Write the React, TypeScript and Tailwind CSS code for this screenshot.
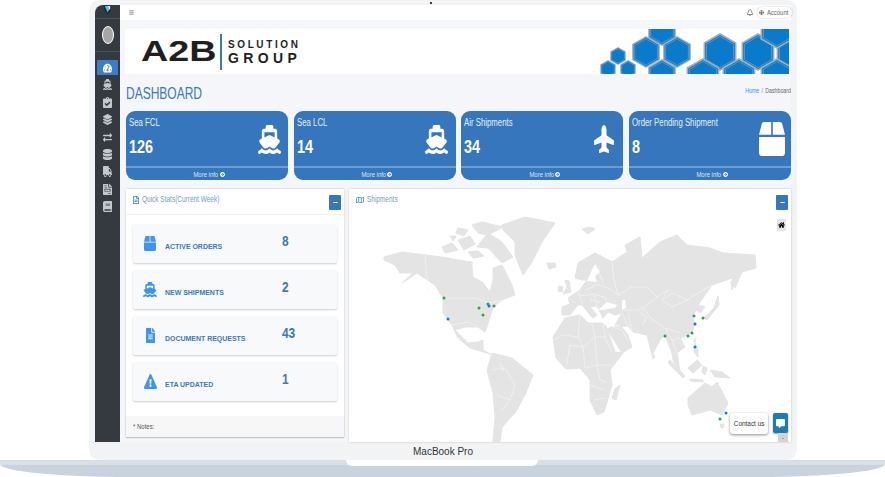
import React from 'react';
import {
  FaBox, FaGlobe, FaRegBell, FaBars, FaHome, FaCommentAlt, FaFileAlt, FaRegFileAlt, FaRegMap,
  FaExclamationTriangle, FaTachometerAlt, FaClipboardCheck, FaLayerGroup, FaExchangeAlt, FaDatabase, FaTruck,
  FaFileInvoice, FaBook, FaMinus, FaPlane, FaArrowCircleRight,
} from 'react-icons/fa';
import { FaShip } from 'react-icons/fa6';

const sideIcons = [FaShip, FaClipboardCheck, FaLayerGroup, FaExchangeAlt, FaDatabase, FaTruck, FaFileInvoice, FaBook];

const stretch = { preserveAspectRatio: 'none' };

const cards = [
  { title: 'Sea FCL', value: '126', icon: <FaShip {...stretch} className="h-[29px] w-[23px]" /> },
  { title: 'Sea LCL', value: '14', icon: <FaShip {...stretch} className="h-[29px] w-[23px]" /> },
  { title: 'Air Shipments', value: '34', icon: <FaPlane {...stretch} className="h-[20px] w-[28px] -rotate-90" /> },
  { title: 'Order Pending Shipment', value: '8', icon: <FaBox {...stretch} className="h-[34px] w-[26px]" /> },
];

const stats = [
  { label: 'ACTIVE ORDERS', value: '8', icon: <FaBox {...stretch} className="h-[15px] w-[12px]" /> },
  { label: 'NEW SHIPMENTS', value: '2', icon: <FaShip {...stretch} className="h-[15px] w-[14px]" /> },
  { label: 'DOCUMENT REQUESTS', value: '43', icon: <FaFileAlt {...stretch} className="h-[15px] w-[9px]" /> },
  { label: 'ETA UPDATED', value: '1', icon: <FaExclamationTriangle {...stretch} className="h-[15px] w-[13px]" /> },
];

// all map coordinates are page pixels, viewBox offset to the panel's corner
const land = [
  // north america
  'M384 257 402 252 425 255 442 257 458 260 472 262 472 268 473 277 483 283 490 292 493 280 493 268 502 265 512 285 515 295 502 300 493 307 487 327 485 332 478 327 465 327 455 330 468 343 478 342 483 340 483 350 492 355 487 353 470 348 458 338 452 325 443 313 443 298 435 285 417 273 402 283 413 273 400 273 395 265 384 260Z',
  // arctic islands
  'M488 233 502 242 513 257 502 263 488 248 477 247Z',
  'M442 247 452 243 458 250 445 253Z',
  'M458 240 470 236 475 244 464 250Z',
  'M472 225 482 222 503 227 488 235 478 233Z',
  'M458 228 468 230 464 236 456 233Z',
  'M468 252 478 251 484 256 473 258Z',
  'M450 236 456 236 453 241Z',
  // greenland
  'M502 225 525 217 555 223 542 242 532 262 523 275 515 255 515 242 503 230Z',
  // iceland, svalbard
  'M547 263 555 263 556 267 549 269Z',
  'M582 229 590 227 595 229 588 234Z',
  // south america
  'M492 353 512 358 533 375 525 395 515 413 502 427 500 442 493 442 495 417 493 393 487 370Z',
  // africa
  'M553 337 565 318 580 315 588 323 602 323 606 326 615 352 623 353 610 370 612 385 604 412 597 415 590 400 590 380 580 368 566 369 556 358Z',
  'M620 385 616 400 612 398 615 389Z',
  // uk, ireland
  'M565 280 569 281 571 292 563 294 567 287Z',
  'M559 286 563 287 562 292 558 291Z',
  // eurasia
  'M562 307 562 315 570 315 578 305 582 305 590 315 593 318 597 315 590 307 597 306 603 318 608 312 615 315 622 313 618 320 615 325 620 325 628 335 632 347 622 353 607 329 612 327 628 326 633 332 647 335 652 355 660 340 665 335 672 353 673 360 680 372 677 353 685 347 680 338 692 333 695 323 692 317 696 310 700 313 705 307 698 305 712 285 732 278 735 288 742 272 756 268 755 255 723 253 710 248 687 245 677 235 660 242 642 258 640 237 625 245 627 252 612 262 595 253 578 263 575 278 582 280 587 280 580 290 568 298 570 304Z',
  // scandinavia tail closes the baltic
  'M595 253 612 262 604 272 596 262 590 270 585 279 578 272 580 262Z',
  // japan, sakhalin
  'M718 296 719 305 707 320 704 318 714 308Z',
  'M738 272 732 290 731 282Z',
  // sri lanka, taiwan
  'M653 354 655 357 653 359 652 356Z',
  'M695 338 696 342 694 342Z',
  // philippines, indonesia, png
  'M695 343 698 350 698 357 694 352Z',
  'M670 360 685 376 683 378 668 363Z',
  'M688 368 697 360 702 365 693 373Z',
  'M690 379 703 380 703 382 690 381Z',
  'M703 366 707 368 705 375 702 372Z',
  'M710 370 722 372 730 378 715 377Z',
  // australia
  'M688 398 705 383 712 387 717 382 728 403 722 415 710 410 692 415 688 405Z',
  'M720 424 724 424 723 428 721 428Z',
];

const seas = [
  // baltic
  'M587 281 592 270 595 264 600 272 595 276 597 282Z',
  // black sea, caspian
  'M598 310 607 302 617 305 615 308 603 310Z',
  'M622 300 625 300 626 308 622 310Z',
];

const borders = [
  'M425 255 428 292 443 298 475 298 490 303 502 300',
  'M452 325 468 322 478 327',
  'M458 338 470 340',
  'M492 370 505 368 515 385 510 400 502 410',
  'M497 395 510 400',
  'M500 362 504 372',
  // africa
  'M553 340 563 335 578 337 583 347 595 337 606 337',
  'M580 315 578 337',
  'M592 324 595 337',
  'M603 324 606 340 612 352',
  'M566 369 570 345 583 347 585 368',
  'M595 337 597 365 600 380 606 382',
  'M585 368 598 365 612 365',
  'M590 385 604 390',
  'M594 400 604 398',
  // europe
  'M568 298 576 303',
  'M578 290 582 304',
  'M580 296 594 294 597 306',
  'M586 290 598 284 612 290 620 296',
  'M594 294 606 298 606 302',
  'M590 300 600 302',
  'M598 270 604 284',
  'M612 262 614 280 618 295',
  // asia
  'M618 295 632 287 647 287 657 297 668 290 662 300 673 293 687 300 672 307 662 300',
  'M687 300 698 293 712 285',
  'M643 308 653 320 665 328 680 333',
  'M622 310 636 310 647 317 642 326',
  'M628 312 632 332',
  'M636 310 643 308 657 297',
  'M622 313 628 326',
  'M612 327 622 330 628 340',
  'M672 340 677 353',
  'M665 328 672 340 680 338',
];

const dots = [
  ['444', '298', 'g'], ['479', '308', 'g'], ['488', '304', 'g'], ['494', '306', 'g'], ['483', '315', 'g'], ['489', '306', 'b'], ['448', '319', 'b'],
  ['694', '316', 'g'], ['703', '318', 'g'], ['692', '333', 'g'], ['695', '324', 'b'], ['665', '336', 'g'], ['688', '336', 'g'], ['695', '347', 'b'], ['726', '413', 'b'], ['720', '419', 'g'],
];

const hexes: [number, number, number][] = [
  [18, 27, 9], [8, 40, 9], [28, 40, 9], [46, 23, 16], [77, 23, 16], [62, 1, 16], [62, 46, 16],
  [120, 23, 19], [158, 23, 19], [193, 23, 19], [103, 48, 19], [139, 48, 19], [177, 48, 19], [177, 1, 19],
];

const hexPoints = (cx: number, cy: number, r: number) =>
  [0, 1, 2, 3, 4, 5]
    .map((i) => {
      const a = (Math.PI / 3) * i - Math.PI / 2;
      return `${cx + r * Math.cos(a)},${cy + r * Math.sin(a)}`;
    })
    .join(' ');

const Banner = () => (
  <div className="ml-[5px] mr-[2px] flex h-[45px] items-center justify-between bg-white pl-[16px]">
    <div className="flex items-center text-[#1f1f1f]">
      <span className="inline-block w-[79px] origin-left scale-x-[1.3] text-[29px] leading-none font-bold">A2B</span>
      <div className="h-[36px] w-[2px] bg-[#3a78c0]" />
      <div className="ml-[6px] flex flex-col gap-[2px]">
        <span className="text-[10px] leading-[10px] font-bold tracking-[2.6px]">SOLUTION</span>
        <span className="text-[14px] leading-[12px] font-bold tracking-[4.4px]">GROUP</span>
      </div>
    </div>
    <svg viewBox="0 0 189 45" className="h-[45px] w-[189px]">
      {hexes.map(([x, y, r]) => (
        <g key={`${x}-${y}`}>
          <polygon points={hexPoints(x, y, r)} fill="#a9adb0" />
          <polygon points={hexPoints(x, y, r * 0.9)} fill="#0a7acb" />
          <polygon points={hexPoints(x, y, r * 0.82)} fill="none" stroke="#7aa9c9" strokeWidth="0.6" />
        </g>
      ))}
    </svg>
  </div>
);

const StatCard = ({ title, value, icon }: (typeof cards)[number]) => (
  <div className="flex h-[69px] flex-col rounded-[9px] bg-[#3676bc] text-white">
    <div className="flex h-[55px] justify-between pr-[5px] pl-[3px]">
      <div className="flex flex-col">
        <span className="mt-[6px] origin-left scale-x-[0.78] text-[10px] leading-[12px] whitespace-nowrap text-[#e6eef7]">{title}</span>
        <span className="mt-[8px] origin-left scale-x-[0.8] text-[18px] leading-[20px] font-bold">{value}</span>
      </div>
      <div className="flex w-[28px] items-center justify-center pt-[1px]">{icon}</div>
    </div>
    <div className="flex h-[14px] items-center justify-center border-t-2 border-[#6c9cd0] pt-[1px] text-[#dbe6f2]">
      <span className="origin-right scale-x-[0.85] text-[7px] leading-none">More info</span>
      <FaArrowCircleRight className="ml-[1px] h-[5px] w-[5px] text-white" />
    </div>
  </div>
);

const MinusButton = () => (
  <div className="flex h-[15px] w-[12px] items-center justify-center rounded-[1px] bg-[#3676bc] text-white">
    <FaMinus className="h-[5px] w-[5px]" />
  </div>
);

const QuickStats = () => (
  <div className="flex h-[248px] w-[218px] shrink-0 flex-col bg-white shadow-[0_0_2px_rgba(0,0,0,0.2)]">
    <div className="flex h-[26px] justify-between border-b border-[#eef0f2] pt-[6px] pr-[3px] pl-[7px]">
      <div className="flex h-[10px] items-center gap-[3px] text-[#3a78c0]">
        <FaRegFileAlt className="h-[8px] w-[6px]" />
        <span className="origin-left scale-x-[0.72] text-[9px] whitespace-nowrap text-[#6f9bcb]">Quick Stats(Current Week)</span>
      </div>
      <MinusButton />
    </div>
    <div className="flex flex-1 flex-col gap-[7px] px-[7px] pt-[9px]">
      {stats.map((s) => (
        <div key={s.label} className="flex h-[39px] items-center rounded-[2px] bg-[#f8f9fa] pl-[9px] shadow-[0_1px_2px_rgba(0,0,0,0.2)]">
          <div className="flex w-[16px] justify-center text-[#3d94f6]">{s.icon}</div>
          <span className="mt-[6px] ml-[7px] w-[117px] origin-left scale-x-[0.87] text-[8px] font-bold whitespace-nowrap text-[#3a78c0]">{s.label}</span>
          <span className="-mt-[4px] origin-left scale-x-[0.85] text-[14px] font-bold text-[#3a78c0]">{s.value}</span>
        </div>
      ))}
    </div>
    <div className="flex h-[21px] items-center bg-[#f7f7f7] pl-[7px] shadow-[0_1px_1px_rgba(0,0,0,0.15)]">
      <span className="origin-left scale-x-[0.75] text-[8px] text-[#555]">* Notes:</span>
    </div>
  </div>
);

const WorldMap = () => (
  <svg viewBox="349 189 442 253" className="absolute inset-0 h-full w-full">
    {land.map((d) => (
      <path key={d} d={d} fill="#e4e4e4" stroke="#e4e4e4" strokeWidth="1" strokeLinejoin="round" />
    ))}
    {seas.map((d) => (
      <path key={d} d={d} fill="#fff" />
    ))}
    {borders.map((d) => (
      <path key={d} d={d} fill="none" stroke="#f6f6f6" strokeWidth="0.6" />
    ))}
    {dots.map(([x, y, c]) => (
      <circle key={`${x}-${y}`} cx={x} cy={y} r="1.5" fill={c === 'g' ? '#28a745' : '#0d7bf2'} />
    ))}
  </svg>
);

const ShipmentsPanel = () => (
  <div className="relative h-[253px] flex-1 bg-white shadow-[0_0_2px_rgba(0,0,0,0.2)]">
    <WorldMap />
    <div className="relative flex justify-between pt-[6px] pr-[3px] pl-[7px]">
      <div className="flex h-[10px] items-center gap-[3px] text-[#3a78c0]">
        <FaRegMap className="h-[8px] w-[8px]" />
        <span className="origin-left scale-x-[0.72] text-[9px] text-[#6f9bcb]">Shipments</span>
      </div>
      <div className="flex flex-col items-end gap-[9px]">
        <MinusButton />
        <div className="mr-[2px] flex h-[12px] w-[9px] items-center justify-center rounded-[1px] bg-[#e6e6e6]">
          <FaHome className="h-[8px] w-[7px] text-black" />
        </div>
      </div>
    </div>
    <div className="absolute right-[23px] bottom-[8px] flex h-[21px] w-[38px] items-center justify-center rounded-[3px] bg-white shadow-[0_1px_3px_rgba(0,0,0,0.45)]">
      <span className="scale-x-[0.8] text-[8px] whitespace-nowrap text-[#333]">Contact us</span>
    </div>
    <div className="absolute right-[3px] bottom-[9px] flex h-[20px] w-[15px] items-center justify-center rounded-[2px] bg-[#1d7ab5] shadow-[0_1px_2px_rgba(0,0,0,0.4)]">
      <FaCommentAlt className="h-[9px] w-[9px] text-white" />
    </div>
    <div className="absolute right-[3px] bottom-0 flex h-[9px] w-[10px] items-center justify-center bg-[#d4d4d4] text-[6px] leading-none text-[#333]">-</div>
  </div>
);

const Sidebar = () => (
  <div className="flex w-[25px] shrink-0 flex-col items-center rounded-tl-[8px] bg-[#343a40] text-[#c2c7d0]">
    <div className="flex h-[14px] w-full justify-center border-b border-[#4b545c]">
      <svg viewBox="0 0 8 11" className="h-[10px] w-[7px]">
        <path d="M0 0 8 0 8 6 4 11 0 6Z" fill="#16323f" />
        <path d="M1 1 4 1 6 5 4 8Z" fill="#5ec3d8" />
        <path d="M4 1 7 1 7 5 6 5Z" fill="#e8eef0" />
      </svg>
    </div>
    <div className="flex h-[33px] w-full items-center justify-center border-b border-[#4b545c]">
      <div className="h-[18px] w-[12px] rounded-[50%] border border-white bg-[#a6a6a6]" />
    </div>
    <div className="mt-[8px] flex w-full flex-col items-center gap-[2.4px]">
      <div className="flex h-[15px] w-[21px] items-center justify-center rounded-[1px] bg-[#3a7ec6] text-white">
        <FaTachometerAlt {...stretch} className="h-[10px] w-[9px]" />
      </div>
      {sideIcons.map((Icon, i) => (
        <div key={i} className="flex h-[15px] items-center justify-center">
          <Icon {...stretch} className="h-[11px] w-[9px]" />
        </div>
      ))}
    </div>
  </div>
);

export default function App() {
  return (
    <div className="relative h-[477px] w-[885px] overflow-hidden bg-white [font-family:'Liberation_Sans',sans-serif]">
      <div className="relative z-10 ml-[89px] h-[460px] w-[708px] rounded-[10px] bg-[#f1f3f5] pt-[5px] pr-[6px] pl-[6px]">
        <div className="flex h-[437px]">
          <Sidebar />
          <div className="flex min-w-0 flex-1 flex-col bg-[#f4f6f9]">
            <div className="flex h-[15px] items-center justify-between bg-white pl-[9px]">
              <FaBars className="h-[5px] w-[5px] text-[#666]" />
              <div className="flex items-center gap-[4px]">
                <FaRegBell className="h-[7px] w-[6px] text-[#666]" />
                <div className="-mr-[1px] flex h-[11px] w-[35px] items-center justify-center gap-[1px] rounded-full bg-white shadow-[0_0_2px_rgba(0,0,0,0.25)]">
                  <FaGlobe className="h-[5px] w-[5px] text-[#666]" />
                  <span className="scale-x-[0.85] text-[7px] leading-none text-[#666]">Account</span>
                </div>
              </div>
            </div>
            <div className="mt-[9px]">
              <Banner />
            </div>
            <div className="flex h-[37px] items-start justify-between pl-[6px]">
              <span className="mt-[10px] origin-left scale-x-[0.75] text-[16px] leading-[20px] text-[#3a78c0]">DASHBOARD</span>
              <div className="mt-[13px] flex origin-right scale-x-[0.75] items-center gap-[3px] text-[7px] leading-[8px] whitespace-nowrap">
                <span className="text-[#3d8bf6]">Home</span>
                <span className="text-[#777]">/</span>
                <span className="text-[#666]">Dashboard</span>
              </div>
            </div>
            <div className="ml-[6px] grid grid-cols-4 gap-[5.5px]">
              {cards.map((c) => (
                <StatCard key={c.title} {...c} />
              ))}
            </div>
            <div className="mt-[9px] ml-[6px] flex gap-[5px]">
              <QuickStats />
              <ShipmentsPanel />
            </div>
          </div>
        </div>
        <div className="mt-[3px] text-center text-[10px] leading-[13px] text-[#333]">
          <span>MacBook Pro</span>
        </div>
      </div>
      <div className="relative h-[17px] rounded-b-[130px_13px] bg-[#c9d3dd] shadow-[inset_0_5px_0_#d9dfe5]">
        <div className="absolute top-0 left-[346px] h-[6px] w-[192px] rounded-b-[6px] bg-white" />
      </div>
      <div className="absolute top-[2px] left-[430px] z-20 h-[2px] w-[2px] rounded-full bg-black" />
    </div>
  );
}
